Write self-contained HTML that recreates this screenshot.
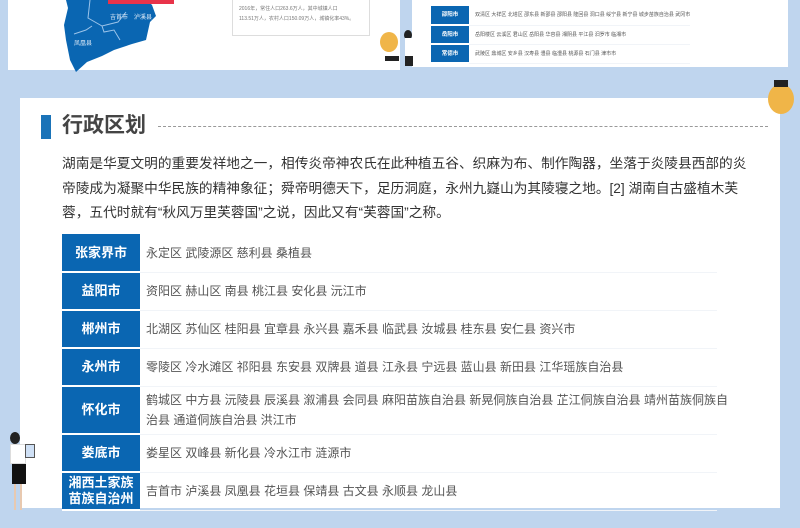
<!DOCTYPE html>
<html><head><meta charset="utf-8"><style>
*{margin:0;padding:0;box-sizing:border-box}
body{width:800px;height:528px;background:#bfd5ee;position:relative;overflow:hidden;font-family:"Liberation Sans","Noto Sans CJK SC",sans-serif}
.abs{position:absolute}
.main{left:20px;top:98px;width:760px;height:410px;background:#fff}
table{border-collapse:collapse}
td{font-size:12px;color:#555}
.lab{background:#0a66b2;color:#fff;font-weight:bold;text-align:center;font-size:13px;border-bottom:2px solid #fff;width:78px;line-height:16px}
.c{padding-left:6px;border-bottom:1px solid #f1f4f8;line-height:20px;overflow:visible}
.t2 td{font-size:5px}
.t2 .lab{width:38px;font-size:5.5px;height:19px}
</style></head><body>
<div class="abs" style="left:8px;top:0;width:392px;height:70px;background:#fff"></div>
<svg class="abs" style="left:62px;top:0" width="100" height="72"><path d="M4 0 L85 0 L90 5 L94 16 L88 22 L84 40 L70 44 L52 50 L40 56 L25 62 L14 72 L8 60 L4 40 L2 25 L6 8Z" fill="#0a66b2"/><path d="M28 0 L26 18 L40 26 L56 22 L64 12 M40 26 L42 32 L52 30 L58 40 M30 26 L24 30 L12 34" stroke="#9cc4ea" fill="none" stroke-width="1"/><text x="48" y="19" font-size="6" fill="#dbe9f7">吉首市</text><text x="72" y="19" font-size="6" fill="#dbe9f7">泸溪县</text><text x="12" y="45" font-size="6" fill="#dbe9f7">凤凰县</text></svg>
<div class="abs" style="left:108px;top:0;width:66px;height:4px;background:#e8334a"></div>
<div class="abs" style="left:232px;top:0;width:138px;height:36px;border:1px solid #ddd;border-top:none;background:#fff;font-size:5px;color:#777;line-height:10px;padding:4px 6px">2016年，常住人口263.6万人，其中城镇人口<br>113.51万人，农村人口150.09万人，城镇化率43%。</div>
<div class="abs" style="left:380px;top:32px;width:18px;height:20px;border-radius:50%;background:#f0b548"></div>
<div class="abs" style="left:385px;top:56px;width:14px;height:5px;background:#222"></div>
<div class="abs" style="left:412px;top:0;width:376px;height:67px;background:#fff"></div>
<table class="abs t2" style="left:431px;top:6px">
<tr><td class="lab">邵阳市</td><td class="c" style="line-height:18px">双清区 大祥区 北塔区 邵东县 新邵县 邵阳县 隆回县 洞口县 绥宁县 新宁县 城步苗族自治县 武冈市</td></tr>
<tr><td class="lab">岳阳市</td><td class="c" style="line-height:18px">岳阳楼区 云溪区 君山区 岳阳县 华容县 湘阴县 平江县 汨罗市 临湘市</td></tr>
<tr><td class="lab">常德市</td><td class="c" style="line-height:18px">武陵区 鼎城区 安乡县 汉寿县 澧县 临澧县 桃源县 石门县 津市市</td></tr>
</table>
<div class="abs" style="left:404px;top:30px;width:8px;height:10px;border-radius:50%;background:#222"></div>
<div class="abs" style="left:405px;top:38px;width:8px;height:28px;background:#fff;border-bottom:10px solid #222"></div>
<div class="abs main"></div>
<div class="abs" style="left:41px;top:115px;width:10px;height:24px;background:#1a73b8"></div>
<div class="abs" style="left:62px;top:112px;font-size:21px;font-weight:bold;color:#444;line-height:28px">行政区划</div>
<div class="abs" style="left:158px;top:126px;width:610px;border-top:1px dashed #999"></div>
<div class="abs" style="left:768px;top:84px;width:26px;height:30px;border-radius:50%;background:#f0b548"></div>
<div class="abs" style="left:774px;top:80px;width:14px;height:7px;background:#222"></div>
<div class="abs" style="left:62px;top:152px;width:702px;font-size:13.7px;color:#333;line-height:24.5px">湖南是华夏文明的重要发祥地之一，相传炎帝神农氏在此种植五谷、织麻为布、制作陶器，坐落于炎陵县西部的炎<br>帝陵成为凝聚中华民族的精神象征；舜帝明德天下，足历洞庭，永州九嶷山为其陵寝之地。[2]&nbsp;湖南自古盛植木芙<br>蓉，五代时就有“秋风万里芙蓉国”之说，因此又有“芙蓉国”之称。</div>
<table class="abs" style="left:62px;top:234px;width:655px;table-layout:fixed">
<colgroup><col style="width:78px"><col></colgroup>
<tr style="height:38px"><td class="lab">张家界市</td><td class="c">永定区 武陵源区 慈利县 桑植县</td></tr>
<tr style="height:38px"><td class="lab">益阳市</td><td class="c">资阳区 赫山区 南县 桃江县 安化县 沅江市</td></tr>
<tr style="height:38px"><td class="lab">郴州市</td><td class="c">北湖区 苏仙区 桂阳县 宜章县 永兴县 嘉禾县 临武县 汝城县 桂东县 安仁县 资兴市</td></tr>
<tr style="height:38px"><td class="lab">永州市</td><td class="c">零陵区 冷水滩区 祁阳县 东安县 双牌县 道县 江永县 宁远县 蓝山县 新田县 江华瑶族自治县</td></tr>
<tr style="height:48px"><td class="lab">怀化市</td><td class="c"><div style="white-space:nowrap">鹤城区 中方县 沅陵县 辰溪县 溆浦县 会同县 麻阳苗族自治县 新晃侗族自治县 芷江侗族自治县 靖州苗族侗族自</div><div>治县 通道侗族自治县 洪江市</div></td></tr>
<tr style="height:38px"><td class="lab">娄底市</td><td class="c">娄星区 双峰县 新化县 冷水江市 涟源市</td></tr>
<tr style="height:38px"><td class="lab">湘西土家族<br>苗族自治州</td><td class="c">吉首市 泸溪县 凤凰县 花垣县 保靖县 古文县 永顺县 龙山县</td></tr>
</table>
<div class="abs" style="left:10px;top:432px;width:10px;height:12px;border-radius:50%;background:#222"></div>
<div class="abs" style="left:10px;top:444px;width:16px;height:20px;background:#fff;border:1px solid #ddd"></div>
<div class="abs" style="left:12px;top:464px;width:14px;height:20px;background:#111"></div>
<div class="abs" style="left:14px;top:484px;width:2px;height:26px;background:#e8c9b0"></div>
<div class="abs" style="left:20px;top:484px;width:2px;height:26px;background:#e8c9b0"></div>
<div class="abs" style="left:25px;top:444px;width:10px;height:14px;border:1px solid #555;background:#cfe0f5"></div>
</body></html>
